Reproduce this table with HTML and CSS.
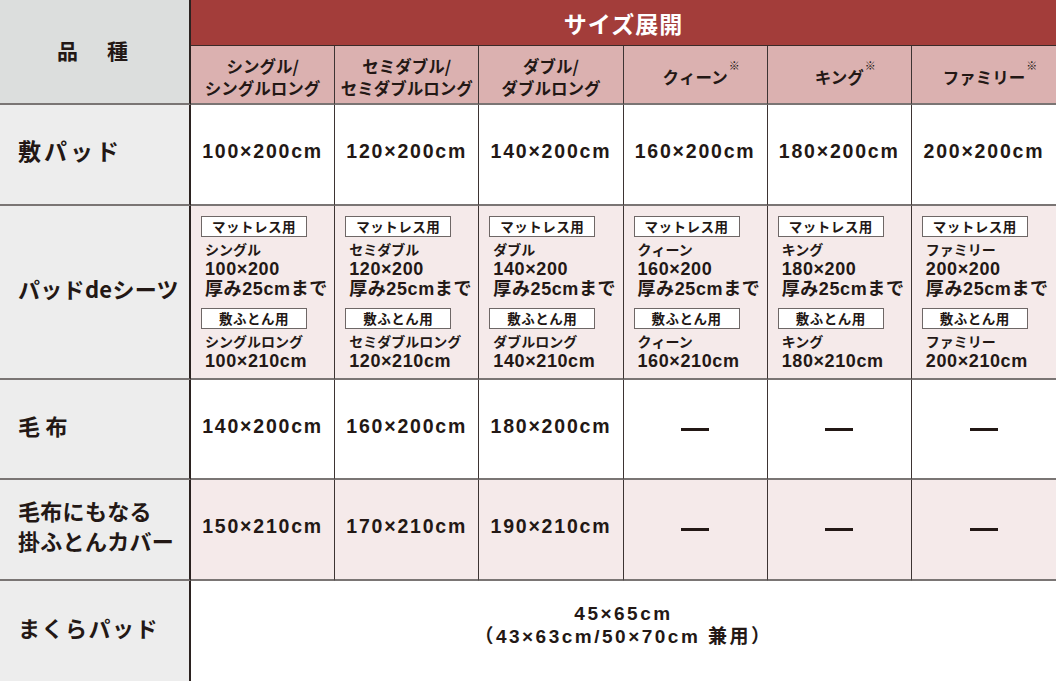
FILE: index.html
```html
<!DOCTYPE html>
<html lang="ja">
<head>
<meta charset="utf-8">
<title>サイズ展開</title>
<link rel="stylesheet" href="styles.css">
</head>
<body>
<div class="table">
  <div class="corner">品　種</div>
  <div class="band">サイズ展開</div>
  <div class="sub">シングル/<br>シングルロング</div>
  <div class="sub">セミダブル/<br>セミダブルロング</div>
  <div class="sub">ダブル/<br>ダブルロング</div>
  <div class="sub"><span class="note">クィーン</span></div>
  <div class="sub"><span class="note">キング</span></div>
  <div class="sub last"><span class="note">ファミリー</span></div>

  <div class="label wide">敷パッド</div>
  <div class="cell num">100×200cm</div>
  <div class="cell num">120×200cm</div>
  <div class="cell num">140×200cm</div>
  <div class="cell num">160×200cm</div>
  <div class="cell num">180×200cm</div>
  <div class="cell num last">200×200cm</div>

  <div class="label">パッドdeシーツ</div>
  <div class="cell pink sheet">
    <div class="tag">マットレス用</div>
    <div class="s">シングル</div>
    <div class="m">100×200</div>
    <div class="m gap">厚み25cmまで</div>
    <div class="tag">敷ふとん用</div>
    <div class="s">シングルロング</div>
    <div class="m">100×210cm</div>
  </div>
  <div class="cell pink sheet">
    <div class="tag">マットレス用</div>
    <div class="s">セミダブル</div>
    <div class="m">120×200</div>
    <div class="m gap">厚み25cmまで</div>
    <div class="tag">敷ふとん用</div>
    <div class="s">セミダブルロング</div>
    <div class="m">120×210cm</div>
  </div>
  <div class="cell pink sheet">
    <div class="tag">マットレス用</div>
    <div class="s">ダブル</div>
    <div class="m">140×200</div>
    <div class="m gap">厚み25cmまで</div>
    <div class="tag">敷ふとん用</div>
    <div class="s">ダブルロング</div>
    <div class="m">140×210cm</div>
  </div>
  <div class="cell pink sheet">
    <div class="tag">マットレス用</div>
    <div class="s">クィーン</div>
    <div class="m">160×200</div>
    <div class="m gap">厚み25cmまで</div>
    <div class="tag">敷ふとん用</div>
    <div class="s">クィーン</div>
    <div class="m">160×210cm</div>
  </div>
  <div class="cell pink sheet">
    <div class="tag">マットレス用</div>
    <div class="s">キング</div>
    <div class="m">180×200</div>
    <div class="m gap">厚み25cmまで</div>
    <div class="tag">敷ふとん用</div>
    <div class="s">キング</div>
    <div class="m">180×210cm</div>
  </div>
  <div class="cell pink sheet last">
    <div class="tag">マットレス用</div>
    <div class="s">ファミリー</div>
    <div class="m">200×200</div>
    <div class="m gap">厚み25cmまで</div>
    <div class="tag">敷ふとん用</div>
    <div class="s">ファミリー</div>
    <div class="m">200×210cm</div>
  </div>

  <div class="label">毛 布</div>
  <div class="cell num">140×200cm</div>
  <div class="cell num">160×200cm</div>
  <div class="cell num">180×200cm</div>
  <div class="cell"><span class="dash"></span></div>
  <div class="cell"><span class="dash"></span></div>
  <div class="cell last"><span class="dash"></span></div>

  <div class="label">毛布にもなる<br>掛ふとんカバー</div>
  <div class="cell pink num">150×210cm</div>
  <div class="cell pink num">170×210cm</div>
  <div class="cell pink num">190×210cm</div>
  <div class="cell pink"><span class="dash"></span></div>
  <div class="cell pink"><span class="dash"></span></div>
  <div class="cell pink last"><span class="dash"></span></div>

  <div class="label end">まくらパッド</div>
  <div class="pillow">45×65cm<br>（43×63cm/50×70cm 兼用）</div>
</div>
</body>
</html>
```

FILE: styles.css
```css
* { box-sizing: border-box; }
html, body { margin: 0; padding: 0; background: #fff; }
body {
  font-family: "Noto Sans CJK JP", "Noto Sans", sans-serif;
  font-weight: 700;
  color: #231815;
}
.table {
  display: grid;
  width: 1056px;
  height: 681px;
  grid-template-columns: 191px repeat(6, 1fr);
  grid-template-rows: 46px 59px 101px 174px 100px 101px 100px;
}
.corner {
  grid-row: 1 / 3;
  grid-column: 1;
  background: #dcdedd;
  border-right: 2px solid #2b2220;
  border-bottom: 2px solid #7a7574;
  display: flex;
  align-items: center;
  justify-content: center;
  font-size: 21px;
  letter-spacing: 4px;
  padding-bottom: 4px;
}
.band {
  grid-column: 2 / 8;
  background: #a33d3a;
  color: #fff;
  border-bottom: 1px solid #3a2a28;
  display: flex;
  align-items: center;
  justify-content: center;
  font-size: 23px;
  letter-spacing: 1px;
}
.sub {
  background: #dbb1b0;
  border-right: 1px solid #3d3433;
  border-bottom: 2px solid #7a7574;
  display: flex;
  align-items: center;
  justify-content: center;
  text-align: center;
  font-size: 16.5px;
  line-height: 22px;
  padding-top: 4px;
}
.note { position: relative; }
.note::after {
  content: "※";
  position: absolute;
  top: -12px;
  right: -12px;
  font-size: 11px;
  font-weight: 400;
}
.label {
  background: #ededed;
  border-right: 2px solid #2b2220;
  border-bottom: 2px solid #7a7574;
  display: flex;
  align-items: center;
  padding-left: 18px;
  padding-bottom: 9px;
  font-size: 22px;
  line-height: 30px;
  letter-spacing: 0.3px;
}
.label.wide { letter-spacing: 3px; font-size: 23px; }
.label.end { border-bottom: none; letter-spacing: 1.5px; }
.cell {
  background: #fff;
  border-right: 1px solid #3d3433;
  border-bottom: 2px solid #7a7574;
  display: flex;
  align-items: center;
  justify-content: center;
}
.last { border-right: none; }
.pink { background: #f5eaea; }
.num {
  font-family: "Liberation Sans", "Noto Sans CJK JP", sans-serif;
  font-size: 19.5px;
  letter-spacing: 1.8px;
  white-space: nowrap;
  padding-bottom: 6px;
}
.sheet {
  flex-direction: column;
  align-items: flex-start;
  justify-content: flex-start;
  padding: 10px 0 0 10px;
}
.tag {
  width: 106px;
  height: 21px;
  background: #fff;
  border: 1px solid #6e6766;
  font-size: 13.5px;
  line-height: 19px;
  text-align: center;
  letter-spacing: 0.5px;
}
.s {
  font-size: 14px;
  line-height: 20px;
  margin-top: 2px;
  padding-left: 4px;
  white-space: nowrap;
}
.m {
  font-family: "Liberation Sans", "Noto Sans CJK JP", sans-serif;
  font-size: 18px;
  line-height: 20px;
  padding-left: 4px;
  letter-spacing: 0.6px;
  white-space: nowrap;
}
.m.gap { margin-bottom: 9px; }
.dash {
  display: block;
  width: 28px;
  height: 3px;
  background: #231815;
}
.pillow {
  grid-column: 2 / 8;
  display: flex;
  align-items: center;
  justify-content: center;
  text-align: center;
  font-family: "Liberation Sans", "Noto Sans CJK JP", sans-serif;
  font-size: 19px;
  letter-spacing: 2.5px;
  line-height: 23px;
  padding-bottom: 12px;
}
```
